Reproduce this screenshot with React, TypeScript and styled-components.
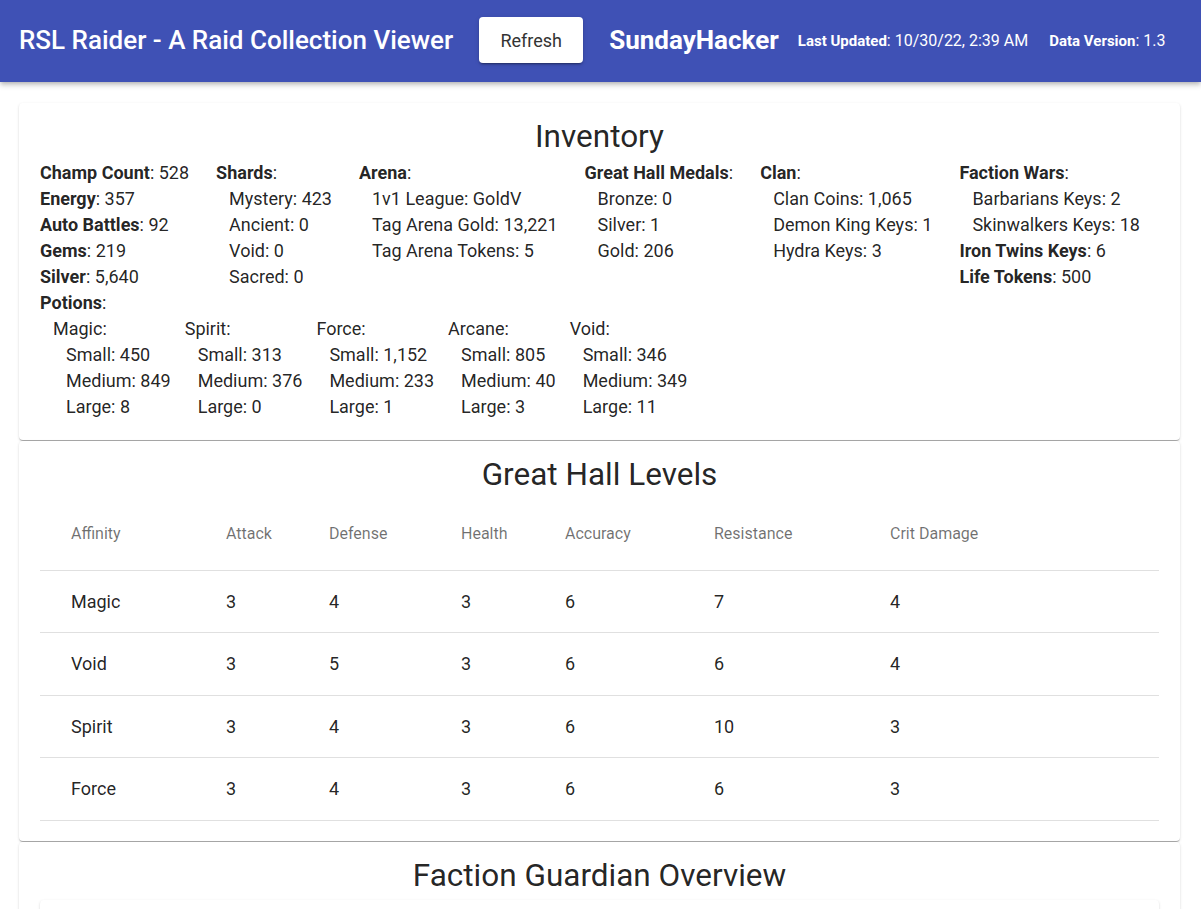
import React from "react";
import styled, { createGlobalStyle } from "styled-components";

const Global = createGlobalStyle`
  html, body { margin: 0; padding: 0; background: #fff; }
  body { font-family: Roboto, "Liberation Sans", Arial, sans-serif; color: rgba(0,0,0,0.87); }
  * { box-sizing: border-box; }
`;

const Bar = styled.header`
  height: 82px;
  background: #3f51b5;
  display: flex;
  align-items: center;
  padding: 0 0 2px 19px;
  color: #fff;
  white-space: nowrap;
  box-shadow: 0 2px 4px -1px rgba(0,0,0,0.2), 0 4px 5px 0 rgba(0,0,0,0.14);
  & > * { flex-shrink: 0; }
`;

const Title = styled.h1`
  margin: 0 26px 0 0;
  font-size: 26px;
  font-weight: 500;
  letter-spacing: 0;
`;

const RefreshButton = styled.button`
  width: 104px;
  height: 46px;
  margin-right: 26px;
  background: #fff;
  border: none;
  border-radius: 4px;
  font-family: inherit;
  font-size: 18px;
  color: #333;
  box-shadow: 0 3px 1px -2px rgba(0,0,0,0.2), 0 2px 2px 0 rgba(0,0,0,0.14), 0 1px 5px 0 rgba(0,0,0,0.12);
`;

const User = styled.span`
  font-size: 26px;
  font-weight: 700;
  margin-right: 19px;
`;

const Meta = styled.span`
  font-size: 16px;
  margin-right: 21px;
  b { font-weight: 700; font-size: 15px; }
`;

const Main = styled.main`
  padding: 21px 21px 0 19px;
  display: flex;
  flex-direction: column;
`;

const Card = styled.section`
  background: #fff;
  border-radius: 4px;
  padding: 16px 21px 20px;
  box-shadow: 0px 2px 1px -1px rgba(0,0,0,0.2), 0px 1px 1px 0px rgba(0,0,0,0.14), 0px 1px 3px 0px rgba(0,0,0,0.12);
  margin-bottom: 1px;
`;

const CardTitle = styled.h2<{ $gap?: number }>`
  margin: 0 0 ${(p) => p.$gap ?? 0}px;
  text-align: center;
  font-size: 31.5px;
  font-weight: 400;
  line-height: 36px;
`;

const Stats = styled.div`
  display: flex;
  flex-wrap: wrap;
  column-gap: 27px;
  font-size: 18px;
  line-height: 26px;
`;

const Column = styled.div`
  display: flex;
  flex-direction: column;
`;

const Line = styled.div<{ $indent?: number }>`
  padding-left: ${(p) => (p.$indent ?? 0) * 13}px;
  white-space: nowrap;
  b { font-weight: 700; }
`;

const PotionRow = styled.div`
  display: flex;
  column-gap: 14px;
  padding-left: 13px;
`;

const Table = styled.table`
  width: 100%;
  border-collapse: collapse;
  font-size: 18px;
`;

const Th = styled.th<{ $w?: number }>`
  text-align: left;
  font-weight: 400;
  font-size: 16px;
  color: rgba(0,0,0,0.56);
  height: 75px;
  padding: 2px 0 0 31px;
  width: ${(p) => (p.$w ? `${p.$w}px` : "auto")};
  border-bottom: 1px solid #e0e0e0;
`;

const Td = styled.td`
  height: 62.5px;
  padding: 0 0 0 31px;
  border-bottom: 1px solid #e0e0e0;
  color: rgba(0,0,0,0.87);
`;

const InnerPaper = styled.div`
  margin-top: 6px;
  height: 40px;
  border-radius: 4px;
  background: #fff;
  box-shadow: 0px 2px 1px -1px rgba(0,0,0,0.2), 0px 1px 1px 0px rgba(0,0,0,0.14), 0px 1px 3px 0px rgba(0,0,0,0.12);
`;

type Item = { label: string; value?: string; bold?: boolean; indent?: number };

const L = ({ label, value, bold, indent }: Item) => (
  <Line $indent={indent}>
    {bold ? <b>{label}</b> : label}:{value !== undefined ? ` ${value}` : ""}
  </Line>
);

const columns: Item[][] = [
  [
    { label: "Champ Count", value: "528", bold: true },
    { label: "Energy", value: "357", bold: true },
    { label: "Auto Battles", value: "92", bold: true },
    { label: "Gems", value: "219", bold: true },
    { label: "Silver", value: "5,640", bold: true },
  ],
  [
    { label: "Shards", bold: true },
    { label: "Mystery", value: "423", indent: 1 },
    { label: "Ancient", value: "0", indent: 1 },
    { label: "Void", value: "0", indent: 1 },
    { label: "Sacred", value: "0", indent: 1 },
  ],
  [
    { label: "Arena", bold: true },
    { label: "1v1 League", value: "GoldV", indent: 1 },
    { label: "Tag Arena Gold", value: "13,221", indent: 1 },
    { label: "Tag Arena Tokens", value: "5", indent: 1 },
  ],
  [
    { label: "Great Hall Medals", bold: true },
    { label: "Bronze", value: "0", indent: 1 },
    { label: "Silver", value: "1", indent: 1 },
    { label: "Gold", value: "206", indent: 1 },
  ],
  [
    { label: "Clan", bold: true },
    { label: "Clan Coins", value: "1,065", indent: 1 },
    { label: "Demon King Keys", value: "1", indent: 1 },
    { label: "Hydra Keys", value: "3", indent: 1 },
  ],
  [
    { label: "Faction Wars", bold: true },
    { label: "Barbarians Keys", value: "2", indent: 1 },
    { label: "Skinwalkers Keys", value: "18", indent: 1 },
    { label: "Iron Twins Keys", value: "6", bold: true },
    { label: "Life Tokens", value: "500", bold: true },
  ],
];

const potions: [string, string, string, string][] = [
  ["Magic", "450", "849", "8"],
  ["Spirit", "313", "376", "0"],
  ["Force", "1,152", "233", "1"],
  ["Arcane", "805", "40", "3"],
  ["Void", "346", "349", "11"],
];

const headers: [string, number | undefined][] = [
  ["Affinity", 155],
  ["Attack", 103],
  ["Defense", 132],
  ["Health", 104],
  ["Accuracy", 149],
  ["Resistance", 176],
  ["Crit Damage", undefined],
];

const rows: string[][] = [
  ["Magic", "3", "4", "3", "6", "7", "4"],
  ["Void", "3", "5", "3", "6", "6", "4"],
  ["Spirit", "3", "4", "3", "6", "10", "3"],
  ["Force", "3", "4", "3", "6", "6", "3"],
];

export default function App() {
  return (
    <>
      <Global />
      <Bar>
        <Title>RSL Raider - A Raid Collection Viewer</Title>
        <RefreshButton>Refresh</RefreshButton>
        <User>SundayHacker</User>
        <Meta>
          <b>Last Updated</b>: 10/30/22, 2:39 AM
        </Meta>
        <Meta>
          <b>Data Version</b>: 1.3
        </Meta>
      </Bar>
      <Main>
        <Card>
          <CardTitle $gap={5}>Inventory</CardTitle>
          <Stats>
            {columns.map((col, i) => (
              <Column key={i}>
                {col.map((it, j) => (
                  <L key={j} {...it} />
                ))}
              </Column>
            ))}
            <Column>
              <L label="Potions" bold />
              <PotionRow>
                {potions.map(([name, s, m, l]) => (
                  <Column key={name}>
                    <L label={name} />
                    <L label="Small" value={s} indent={1} />
                    <L label="Medium" value={m} indent={1} />
                    <L label="Large" value={l} indent={1} />
                  </Column>
                ))}
              </PotionRow>
            </Column>
          </Stats>
        </Card>
        <Card>
          <CardTitle $gap={2}>Great Hall Levels</CardTitle>
          <Table>
            <thead>
              <tr>
                {headers.map(([h, w]) => (
                  <Th key={h} $w={w}>
                    {h}
                  </Th>
                ))}
              </tr>
            </thead>
            <tbody>
              {rows.map((r) => (
                <tr key={r[0]}>
                  {r.map((c, i) => (
                    <Td key={i}>{c}</Td>
                  ))}
                </tr>
              ))}
            </tbody>
          </Table>
        </Card>
        <Card>
          <CardTitle>Faction Guardian Overview</CardTitle>
          <InnerPaper />
        </Card>
      </Main>
    </>
  );
}
